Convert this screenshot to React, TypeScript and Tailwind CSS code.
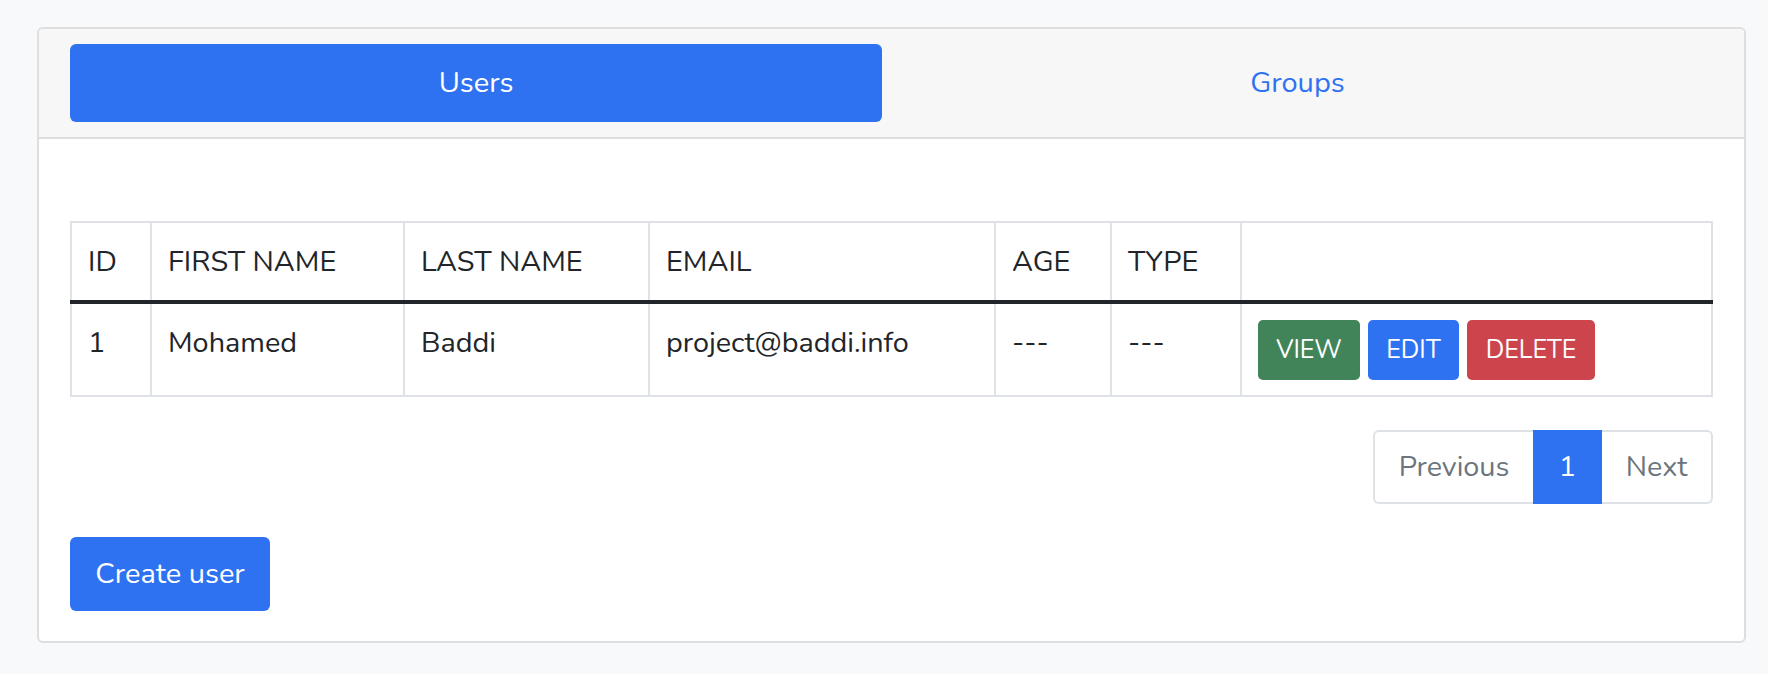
import React from 'react';

const font = { fontFamily: 'Nunito, Lato, "Open Sans", sans-serif' };

const columns = [
  { label: 'ID', width: 'w-[80px]' },
  { label: 'FIRST NAME', width: 'w-[253px]' },
  { label: 'LAST NAME', width: 'w-[245px]' },
  { label: 'EMAIL', width: 'w-[346px]' },
  { label: 'AGE', width: 'w-[116px]' },
  { label: 'TYPE', width: 'w-[130px]' },
  { label: '', width: '' },
];

const users = [
  { id: 1, first: 'Mohamed', last: 'Baddi', email: 'project@baddi.info', age: '---', type: '---' },
];

const cell = 'border-2 border-t-0 border-[#dee2e6] px-[16px] pt-[16px] pb-[15px] align-top';

function Tabs() {
  return (
    <div className="flex bg-[#f7f7f7] border-b-2 border-[#dedede] px-[31px] py-[15px]">
      <button className="w-[812px] h-[78px] rounded-[6px] bg-[#2f72f1] text-white text-[29px]">
        Users
      </button>
      <button className="flex-1 h-[78px] text-[#2f72f1] text-[29px]">Groups</button>
    </div>
  );
}

function UsersTable() {
  return (
    <table className="w-full border-collapse text-[28.8px] leading-[45px] text-[#212529]">
      <colgroup>
        {columns.map((c, i) => (
          <col key={i} className={c.width} />
        ))}
      </colgroup>
      <thead>
        <tr className="border-b-4 border-[#212529]">
          {columns.map((c, i) => (
            <th
              key={i}
              className="border-2 border-[#dee2e6] border-b-[#212529] border-b-4 px-[16px] py-[16px] text-left font-normal align-top"
            >
              {c.label}
            </th>
          ))}
        </tr>
      </thead>
      <tbody>
        {users.map((u) => (
          <tr key={u.id}>
            <td className={cell}>{u.id}</td>
            <td className={cell}>{u.first}</td>
            <td className={cell}>{u.last}</td>
            <td className={cell}>{u.email}</td>
            <td className={cell}>{u.age}</td>
            <td className={cell}>{u.type}</td>
            <td className={cell}>
              <div className="flex gap-[8px] text-white text-[25px]">
                <button className="w-[102px] h-[60px] rounded-[5px] bg-[#41845a]">VIEW</button>
                <button className="w-[91px] h-[60px] rounded-[5px] bg-[#2f72f1]">EDIT</button>
                <button className="w-[128px] h-[60px] rounded-[5px] bg-[#cc454d]">DELETE</button>
              </div>
            </td>
          </tr>
        ))}
      </tbody>
    </table>
  );
}

function Pagination() {
  return (
    <div className="flex justify-end mt-[33px]">
      <div className="flex h-[74px] text-[28.8px] text-[#6c757d]">
        <button className="w-[160px] border-2 border-r-0 border-[#dee2e6] rounded-l-[6px] bg-white">
          Previous
        </button>
        <button className="w-[69px] bg-[#2f72f1] text-white">1</button>
        <button className="w-[111px] border-2 border-l-0 border-[#dee2e6] rounded-r-[6px] bg-white">
          Next
        </button>
      </div>
    </div>
  );
}

export default function App() {
  return (
    <div className="min-h-[674px] bg-[#f8f9fb] pt-[27px] pl-[37px] pr-[22px]" style={font}>
      <div className="h-[616px] rounded-[6px] border-2 border-[#dedede] bg-white overflow-hidden">
        <Tabs />
        <div className="px-[31px] pt-[82px]">
          <UsersTable />
          <Pagination />
          <button className="mt-[33px] w-[200px] h-[74px] rounded-[6px] bg-[#2f72f1] text-white text-[29px]">
            Create user
          </button>
        </div>
      </div>
    </div>
  );
}
